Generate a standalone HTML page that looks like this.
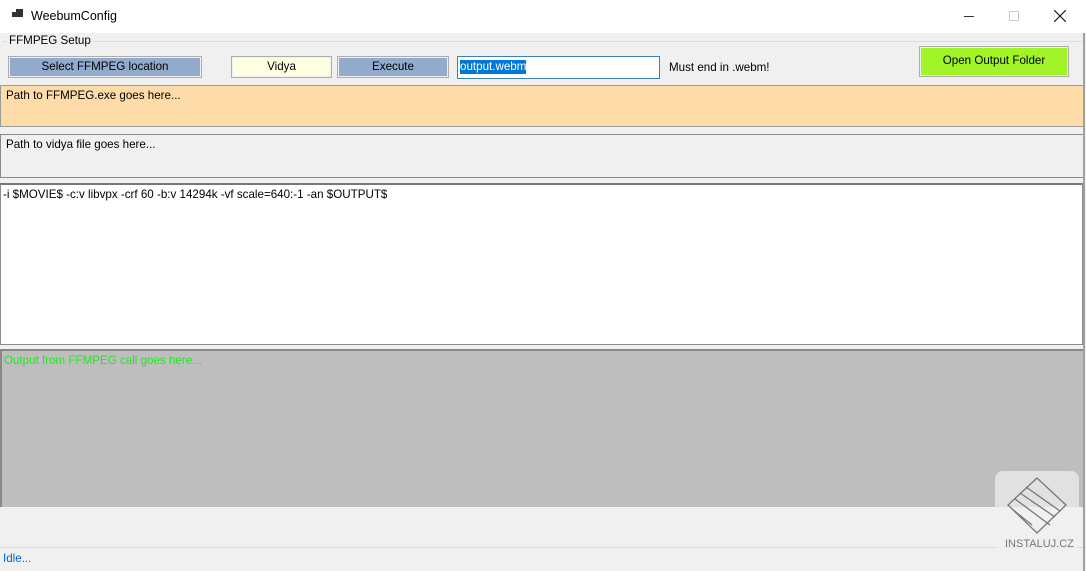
<!DOCTYPE html>
<html><head><style>
body{margin:0;width:1086px;height:571px;background:#f0f0f0;font-family:"Liberation Sans",sans-serif;font-size:11.6px;position:relative;overflow:hidden;color:#000}
div{position:absolute;box-sizing:border-box}
.btn{border:1px solid #adadad;text-align:center;line-height:17px;box-shadow:inset 0 0 0 1px #f0f0f0}
</style></head><body>
<div style="left:0;top:0;width:1086px;height:33px;background:#fff"></div>
<div style="left:12px;top:12px;width:5px;height:5px;background:#333"></div>
<div style="left:16px;top:9px;width:7px;height:8px;background:#333"></div>
<div style="left:31px;top:9px;font-size:12.5px">WeebumConfig</div>
<div style="left:964px;top:16px;width:10px;height:1px;background:#333"></div>
<div style="left:1009px;top:11px;width:10px;height:10px;border:1px solid #ccc"></div>
<svg style="position:absolute;left:1054px;top:10px" width="12" height="12"><path d="M0 0L12 12M12 0L0 12" stroke="#222" stroke-width="1.2"/></svg>
<div style="left:3px;top:41px;width:1080px;height:1px;background:#dcdcdc"></div>
<div style="left:7px;top:34px;background:#f0f0f0;padding:0 2px">FFMPEG Setup</div>
<div class="btn" style="left:8px;top:56px;width:194px;height:22px;background:#92abcc;line-height:19px">Select FFMPEG location</div>
<div class="btn" style="left:231px;top:56px;width:101px;height:22px;background:#fefee0;line-height:19px">Vidya</div>
<div class="btn" style="left:337px;top:56px;width:112px;height:22px;background:#92abcc;line-height:19px">Execute</div>
<div style="left:457px;top:56px;width:203px;height:23px;background:#fff;border:1px solid #3c7fb1"><span style="position:absolute;left:2px;top:3px;background:#0078d7;color:#fff;line-height:14px">output.webm</span></div>
<div style="left:669px;top:61px">Must end in .webm!</div>
<div class="btn" style="left:919px;top:46px;width:150px;height:31px;background:#a0f427;line-height:28px">Open Output Folder</div>
<div style="left:0;top:85px;width:1084px;height:42px;background:#fddcaa;border:1px solid #9a9a9a;padding:3px 5px">Path to FFMPEG.exe goes here...</div>
<div style="left:0;top:134px;width:1084px;height:44px;background:#f0f0f0;border:1px solid #8a8a8a;padding:3px 5px">Path to vidya file goes here...</div>
<div style="left:0;top:183px;width:1083px;height:162px;background:#fff;border:1px solid #8a8a8a;border-top:2px solid #777;padding:3px 2px">-i $MOVIE$ -c:v libvpx -crf 60 -b:v 14294k -vf scale=640:-1 -an $OUTPUT$</div>
<div style="left:0;top:349px;width:1083px;height:158px;background:#bebebe;border-top:2px solid #888;border-left:2px solid #888;padding:3px 2px;color:#22e822">Output from FFMPEG call goes here...</div>
<div style="left:0;top:547px;width:1086px;height:1px;background:#dadada"></div>
<div style="left:3px;top:552px;color:#0066cc">Idle...</div>
<div style="left:1083px;top:33px;width:2px;height:538px;background:#a0a0a0"></div>
<div style="left:995px;top:471px;width:84px;height:90px;background:rgba(240,240,240,0.7);border-radius:8px"></div>
<svg style="position:absolute;left:1000px;top:475px" width="75" height="65"><g fill="none" stroke="#777" stroke-width="1.3"><path d="M37 3 L66 30 L37 58 L8 30 Z"/><path d="M20 18 L55 42 M15 24 L50 50 M26 12 L60 36 M12 34 L32 50"/></g></svg>
<div style="left:1005px;top:538px;font-size:11px;color:#777">INSTALUJ.CZ</div>
</body></html>
